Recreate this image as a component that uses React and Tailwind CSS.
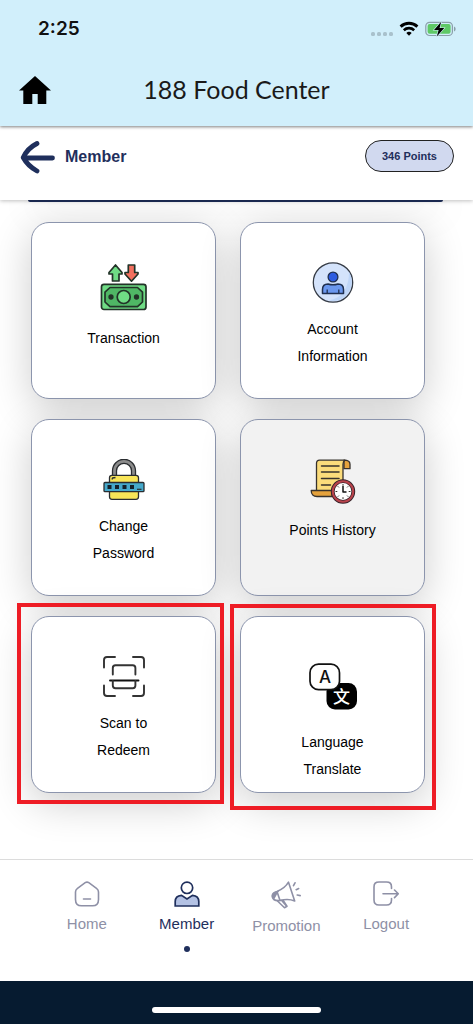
import clsx from "clsx";

const StatusIcons = () => (
  <div className="flex items-center gap-1.5" aria-hidden="true">
    <svg width="22" height="16" viewBox="0 0 22 16" fill="#a9c1cc">
      <rect x="0" y="11" width="4" height="4" rx="1.500" />
      <rect x="6" y="11" width="4" height="4" rx="1.500" />
      <rect x="12" y="11" width="4" height="4" rx="1.500" />
      <rect x="18" y="11" width="4" height="4" rx="1.500" />
    </svg>
    <svg width="20" height="16" viewBox="0 0 20 16" fill="none" stroke="#000">
      <path d="M1.600 5.600a12.200 12.200 0 0 1 16.800 0" strokeWidth="2.900" />
      <path d="M4.800 9.200a7.600 7.600 0 0 1 10.400 0" strokeWidth="2.600" />
      <path d="M10 14.700l-2.700-2.700a3.900 3.900 0 0 1 5.400 0z" fill="#000" stroke="none" />
    </svg>
    <svg width="31" height="16" viewBox="0 0 31 16">
      <rect x="0.800" y="1.300" width="26.600" height="13.200" rx="3.800" fill="none" stroke="#8b9fa9" strokeWidth="1.200" />
      <rect x="2.600" y="3" width="23" height="9.800" rx="2" fill="#5fc966" />
      <path d="M29 5.600v4.800c1.200-.5 1.600-1.400 1.600-2.400s-.4-1.900-1.600-2.400z" fill="#8b9fa9" />
      <path
        d="M16.200 .8L9 9h4.600l-1.800 6.400 7.500-8.400h-4.700z"
        fill="#000"
        stroke="#d1effb"
        strokeWidth="1.200"
        paintOrder="stroke"
      />
    </svg>
  </div>
);

const MoneyIcon = () => (
  <svg width="48" height="50" viewBox="0 0 48 50" stroke="#223328" strokeWidth="1.700" strokeLinejoin="round">
    <path d="M15.500 3l6.500 7.500v1.500h-3v7h-6.500v-7H9v-1.500z" fill="#6fdc85" />
    <path d="M28.300 3h6.400v7.500H38V12l-6.500 7.200L25 12v-1.500h3.300z" fill="#f3705f" />
    <rect x="1.500" y="22.300" width="44.500" height="25.200" rx="2.500" fill="#6fdc85" />
    <path d="M10 25.500h27.500l5 4.700v9.800l-5 4.700H10l-5-4.700v-9.800z" fill="#4fb765" />
    <circle cx="23.700" cy="35" r="6.500" fill="#6fdc85" />
    <circle cx="11" cy="35" r="1.800" fill="#223328" />
    <circle cx="36.500" cy="35" r="1.800" fill="#223328" />
  </svg>
);

const AccountIcon = () => (
  <svg width="42" height="41" viewBox="0 0 42 41" stroke="#1f2f50">
    <circle cx="21" cy="20.500" r="19.700" fill="#d4e3fb" stroke="#353b45" strokeWidth="1.300" />
    <path d="M37 10a19 19 0 0 1-20 28.600C30 36 37 26 37 10z" fill="#bfd6f8" stroke="none" />
    <circle cx="21" cy="15" r="4.900" fill="#2c5be0" strokeWidth="1.300" />
    <path
      d="M10.500 31.500v-4c0-3.500 2-5.500 5.500-5.500 3 1 7 1 10 0 3.500 0 5.500 2 5.500 5.500v4z"
      fill="#6a97ee"
      strokeWidth="1.500"
      strokeLinejoin="round"
    />
    <path d="M15.200 27.500v4M26.800 27.500v4" strokeWidth="1.300" />
  </svg>
);

const PasswordIcon = () => (
  <svg width="42" height="41" viewBox="0 0 42 41" stroke="#2a2d30" strokeWidth="1.300" strokeLinejoin="round">
    <path d="M9.500 17v-5.200a11.500 11.500 0 0 1 23 0V17h-4v-5.200a7.500 7.500 0 0 0-15 0V17z" fill="#8c8c8c" />
    <rect x="6.500" y="16.300" width="29" height="24" rx="2.500" fill="#f8e558" />
    <path d="M9 20.500l.5-1.500 3-.5" fill="none" />
    <rect x="1" y="23.500" width="40" height="9.200" rx="1" fill="#45a9cb" />
    <path d="M4.500 28h4M12 28h4M19.500 28h4M27 28h4" stroke="#14202a" strokeWidth="3.800" />
    <path d="M34 30.300h4.500" strokeWidth="1.200" />
  </svg>
);

const HistoryIcon = () => (
  <svg width="46" height="45" viewBox="0 0 46 45" stroke="#37322d" strokeWidth="1.300" strokeLinejoin="round">
    <path d="M34 1.200c4 0 6 1 6 4v4.500h-6z" fill="#e5a23c" />
    <path d="M6.500 31.500V4.200c0-2 1-3 3-3H35c-1.500.8-2 2-2 4v31H6.500z" fill="#fbdc7b" />
    <path d="M1.200 31.500h21v6H7c-3.500 0-5.800-2-5.800-6z" fill="#e5a23c" />
    <path d="M11.500 7h17.500M11.500 13h17.500M11.500 19.500h17.500M11.500 26h9" strokeWidth="1.500" strokeLinecap="round" />
    <circle cx="33" cy="32.500" r="10.300" fill="#fff" stroke="#37232a" strokeWidth="3.800" />
    <circle cx="33" cy="32.500" r="10.200" fill="none" stroke="#b9434c" strokeWidth="2" />
    <path
      d="M33 25v1.800M33 38.200V40M25.500 32.500h1.800M38.700 32.500h1.800M27.800 27.300l1.100 1.100M37.100 36.600l1.100 1.100M27.800 37.700l1.100-1.100M37.100 28.400l1.100-1.100"
      strokeWidth="1"
    />
    <path d="M33 27v6h3.500" fill="none" stroke="#111" strokeWidth="1.500" />
  </svg>
);

const ScanIcon = () => (
  <svg
    width="42"
    height="41"
    viewBox="0 0 42 41"
    fill="none"
    stroke="#333"
    strokeWidth="1.900"
    strokeLinecap="round"
    strokeLinejoin="round"
  >
    <path d="M1 11.500V4c0-2 1-3 3-3h8M30 1h8c2 0 3 1 3 3v7.500M41 29.500V37c0 2-1 3-3 3h-8M12 40H4c-2 0-3-1-3-3v-7.500" />
    <path d="M9.800 18.500V12c0-2 .7-2.700 2.700-2.700h17.200c2 0 2.700.7 2.700 2.700v6.500" />
    <path d="M7 24.500h28.500" stroke="#111" />
    <path d="M9.800 25v4.500c0 2 .7 2.700 2.700 2.700h17.200c2 0 2.700-.7 2.700-2.700V25" />
  </svg>
);

const TranslateIcon = () => (
  <svg width="48" height="60" viewBox="0 0 48 60" aria-hidden="true">
    <rect x="17.500" y="27" width="30.500" height="26.500" rx="8.500" fill="#000" />
    <rect x="1" y="8.200" width="29.500" height="25.500" rx="8.500" fill="#fff" stroke="#111" strokeWidth="1.700" />
    <text x="16" y="27" textAnchor="middle" fontSize="17" fontFamily="Inter, sans-serif" fontWeight="500" fill="#111">
      A
    </text>
    <text
      x="32.500"
      y="46.500"
      textAnchor="middle"
      fontSize="17"
      fontFamily="'Noto Sans CJK SC', sans-serif"
      fontWeight="500"
      fill="#fff"
    >
      文
    </text>
  </svg>
);

const HomeNavIcon = () => (
  <svg width="26" height="26" viewBox="0 0 26 26" fill="none" stroke="currentColor" strokeWidth="1.600" strokeLinecap="round">
    <path d="M11.200 1.700c1.200-.8 2.400-.8 3.600 0l7.700 5.600c1.400 1 2 2 2 3.700v7.500c0 4-2 6.300-6 6.300h-11c-4 0-6-2.300-6-6.300V11c0-1.700.6-2.700 2-3.700z" />
    <path d="M9.500 18h7" />
  </svg>
);

const MemberNavIcon = () => (
  <svg width="26" height="26" viewBox="0 0 26 26" stroke="currentColor" strokeWidth="1.700">
    <circle cx="13" cy="6.800" r="5.700" fill="#fff" />
    <path d="M1.200 25v-4.500c0-3.500 2.300-5.800 6.300-6.200L13 18l5.500-3.700c4 .4 6.300 2.700 6.300 6.200V25z" fill="#b4c2e4" />
  </svg>
);

const PromotionNavIcon = () => (
  <svg
    width="30"
    height="28"
    viewBox="0 0 30 28"
    fill="none"
    stroke="currentColor"
    strokeWidth="1.600"
    strokeLinecap="round"
    strokeLinejoin="round"
  >
    <path d="M17.500 1.200L23.700 20c-4.700-2-9-2-14.700-.5L6 10.500c5-2 9-5 11.500-9.300z" />
    <path d="M7 10.500c-3.500.5-6 2.500-5.500 5.500.5 2.700 3 4 7.500 3.500" />
    <path d="M5.500 10.900C2.800 11.500 1 13.500 1.500 16l1.200 1.500 2.500-4.500z" fill="currentColor" />
    <path d="M6.500 20l7 6.800 2.500-1.500-4-6M10.500 19.300l4.300 5" />
    <path d="M22.500 4.700L24 1.800M25.200 8.700l2.500-1.200M26.200 14l3 .6" />
  </svg>
);

const LogoutNavIcon = () => (
  <svg
    width="26"
    height="26"
    viewBox="0 0 26 26"
    fill="none"
    stroke="currentColor"
    strokeWidth="1.600"
    strokeLinecap="round"
    strokeLinejoin="round"
  >
    <path d="M18.500 7.500V6c0-3.500-1.500-5-5-5H6C2.500 1 1 2.500 1 6v13c0 3.500 1.500 5 5 5h7.500c3.500 0 5-1.500 5-5v-1.500" />
    <path d="M10 12.800h15M21.500 9l3.800 3.800-3.800 3.800" />
  </svg>
);

const cards = [
  { key: "transaction", lines: ["Transaction"], icon: MoneyIcon },
  { key: "account", lines: ["Account", "Information"], icon: AccountIcon },
  { key: "password", lines: ["Change", "Password"], icon: PasswordIcon },
  { key: "history", lines: ["Points History"], icon: HistoryIcon, active: true },
  {
    key: "scan",
    lines: ["Scan to", "Redeem"],
    icon: ScanIcon,
    outline: "-top-[13px] -bottom-[11px] -left-3.5 -right-2",
  },
  {
    key: "language",
    lines: ["Language", "Translate"],
    icon: TranslateIcon,
    outline: "-top-3 -bottom-[17px] -left-2.5 -right-[11px]",
  },
];

const tabs = [
  { key: "home", label: "Home", icon: HomeNavIcon },
  { key: "member", label: "Member", icon: MemberNavIcon, current: true },
  { key: "promotion", label: "Promotion", icon: PromotionNavIcon },
  { key: "logout", label: "Logout", icon: LogoutNavIcon },
];

const Card = (props) => {
  const { lines, icon: CardIcon, active, outline } = props;

  return (
    <div className="relative flex">
      <button
        type="button"
        className={clsx(
          "flex h-[177px] w-full flex-col items-center gap-[13px] rounded-[18px] border border-[#8c95ad] pt-[39px] text-sm leading-[27px] text-black shadow-[0_10px_40px_rgba(0,0,0,0.2)]",
          active ? "bg-[#f2f2f2]" : "bg-white"
        )}
      >
        <CardIcon />
        <span>
          {lines.map((line) => (
            <span key={line} className="block">
              {line}
            </span>
          ))}
        </span>
      </button>
      {outline && (
        <div className={clsx("pointer-events-none absolute z-10 border-4 border-[#ee1c25]", outline)} />
      )}
    </div>
  );
};

export default function App() {
  return (
    <div className="flex min-h-screen flex-col bg-white font-['Liberation_Sans',Arial,sans-serif]">
      <header className="relative z-20 bg-[#d1effb] shadow-[0_1px_3px_rgba(0,0,0,0.5)]">
        <div className="flex h-[58px] items-center justify-between pr-[17px] pl-[38px]">
          <span className="font-[Inter,sans-serif] text-[19px] font-semibold text-[#111]">2:25</span>
          <StatusIcons />
        </div>
        <div className="grid h-[68px] grid-cols-[32px_1fr_32px] items-center px-[19px] pb-1">
          <a href="#home" aria-label="Home">
            <svg width="32" height="28" viewBox="0 0 32 28" fill="#000">
              <path d="M16 0L0 14.500h4.300V28h9V18h5.400v10h8.600V14.500H32z" />
            </svg>
          </a>
          <h1 className="text-center font-[Lato,sans-serif] text-[25px] text-[#1a1a1a]">188 Food Center</h1>
        </div>
      </header>

      <div className="relative z-10 flex h-[74px] items-start justify-between bg-white pt-3.5 pr-[19px] pl-5 shadow-[0_1px_4px_rgba(0,0,0,0.25)]">
        <a href="#back" className="flex items-center gap-2.5 text-base font-bold text-[#1f2f5c]">
          <svg
            width="35"
            height="34"
            viewBox="0 0 35 34"
            fill="none"
            stroke="currentColor"
            strokeWidth="4.800"
            strokeLinecap="round"
            strokeLinejoin="round"
          >
            <path d="M17 3.500C12 6 6 11.500 3.200 17.500c3 5.500 8.500 10.500 13.800 13.500M4 18h28.500" />
          </svg>
          Member
        </a>
        <span className="flex h-8 items-center rounded-full border border-[#222] bg-[#d1d9ef] px-4 text-[11px] font-bold text-[#1f2f5c]">
          346 Points
        </span>
      </div>

      <main className="flex-1 overflow-hidden">
        <div className="mr-[30px] ml-7 h-0.5 rounded-b-[18px] border-b-2 border-[#1f2f5c] shadow-[0_4px_36px_rgba(0,0,0,0.4)]" />
        <div className="grid grid-cols-2 gap-x-6 gap-y-5 pt-5 pr-12 pb-16 pl-[31px]">
          {cards.map(({ key, ...card }) => (
            <Card key={key} {...card} />
          ))}
        </div>
      </main>

      <nav className="grid h-[122px] grid-cols-4 border-t border-[#dcdcdc] bg-white px-[37px] pt-[21px]">
        {tabs.map(({ key, label, icon: TabIcon, current }) => (
          <a
            key={key}
            href={"#" + key}
            aria-current={current ? "page" : undefined}
            className={clsx(
              "flex flex-col items-center text-[15px] leading-5",
              current ? "text-[#1f2f5c]" : "text-[#8e90a6]"
            )}
          >
            <TabIcon />
            <span className="mt-[7px]">{label}</span>
            {current && <span className="mt-3 size-1.5 rounded-full bg-[#1f2f5c]" />}
          </a>
        ))}
      </nav>

      <footer className="flex h-[43px] justify-center bg-[#061b30] pt-[26px]">
        <div className="h-1.5 w-[169px] rounded-full bg-white" />
      </footer>
    </div>
  );
}
